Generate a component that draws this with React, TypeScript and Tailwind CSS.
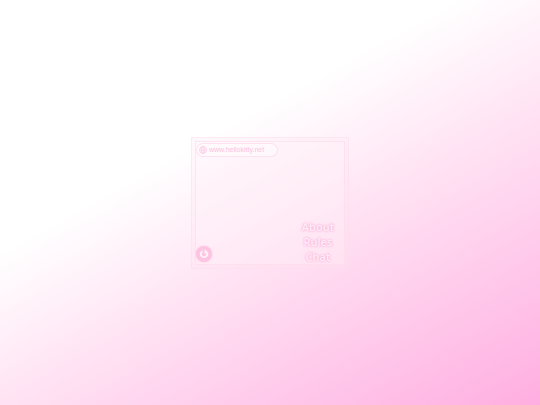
import React from "react"

const links = ["About", "Rules", "Chat"]

function GlobeIcon() {
    return (
        <svg className="h-2 w-2 shrink-0" viewBox="0 0 16 16" fill="none" stroke="#fdd0e8" strokeWidth="2" aria-hidden="true">
            <circle cx="8" cy="8" r="7" />
            <ellipse cx="8" cy="8" rx="3" ry="7" />
            <path d="M1 8h14M8 1v14" strokeWidth="1.2" />
        </svg>
    )
}

function SmileIcon() {
    return (
        <svg className="h-2.5 w-2.5" viewBox="0 0 20 20" fill="none" aria-hidden="true">
            <path d="M4 7c-1 5 1 9 6 9s8-4 6-9" stroke="#fff0f8" strokeWidth="4" />
            <path d="M11 1v8h5l1-4z" fill="#fff0f8" />
            <path d="M3 6l4-4v7H3z" fill="#fff0f8" />
        </svg>
    )
}

export default function App() {
    return (
        <main className="flex min-h-screen items-center justify-center bg-[linear-gradient(151deg,#ffffff_36%,#ffe1f3_59%,#ffaee1_100%)]">
            <section className="w-[158px] border border-[#fddcec]/50 bg-[#ffe2f0]/25 p-[3px]">
                <div className="flex min-h-[124px] flex-col justify-between border border-[#fdd8ea]/60 bg-white/20">
                    <a
                        href="#home"
                        className="mt-px flex h-3.5 w-[82px] items-center gap-0.5 rounded-full border border-[#fddcec]/80 bg-white/40 px-0.5 font-['Liberation_Sans',sans-serif] text-[7px] leading-[10px] text-[#fbc4de]"
                    >
                        <GlobeIcon />
                        www.hellokitty.net
                    </a>
                    <div className="flex items-end justify-between pr-2.5">
                        <button
                            type="button"
                            aria-label="Smile"
                            className="mb-0.5 flex h-4 w-4 items-center justify-center rounded-full bg-[#fdc4e2] shadow-[0_0_2px_#fdc4e2]"
                        >
                            <SmileIcon />
                        </button>
                        <nav className="flex flex-col items-center font-['Open_Sans',sans-serif] text-[11px] font-semibold leading-[15px] text-[#ffeefa] [text-shadow:0_0_1px_#fab4da,0_0_2px_#fab4da,0_0_3px_#fbbfe0]">
                            {links.map((e, i) => (
                                <a href={"#" + e.toLowerCase()} key={i}>{e}</a>
                            ))}
                        </nav>
                    </div>
                </div>
            </section>
        </main>
    )
}
